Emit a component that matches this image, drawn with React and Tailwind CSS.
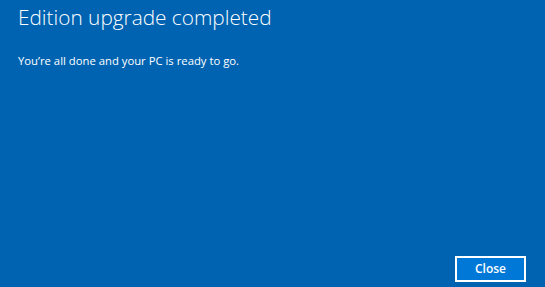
export default function App() {
  return (
    <div className="flex h-[287px] w-[545px] flex-col bg-[#0063b1] px-[18px] font-['Open_Sans','Liberation_Sans',sans-serif] text-white">
      <h1 className="mt-[2px] text-[20.8px] font-light leading-[30px]">Edition upgrade completed</h1>
      <p className="mt-[21px] text-[11.3px] leading-[16px]">You’re all done and your PC is ready to go.</p>
      <div className="mt-auto mb-[5px] flex justify-end pr-[1px]">
        <button className="h-[26px] w-[71px] border-2 border-white bg-[#0078d7] text-[12px] font-semibold leading-none text-white">
          Close
        </button>
      </div>
    </div>
  )
}
